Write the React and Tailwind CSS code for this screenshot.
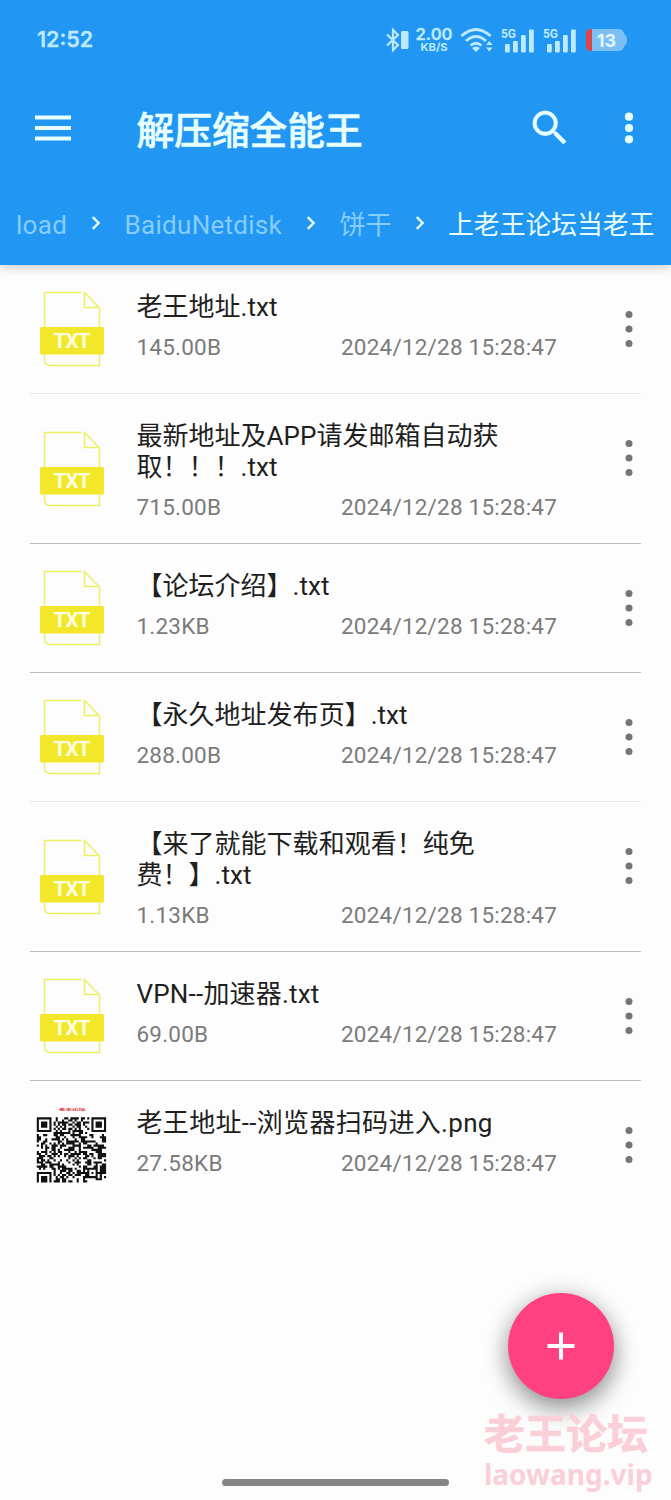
import React from "react";

const files = [
  { name: ["老王地址.txt"], size: "145.00B", faint: true },
  { name: ["最新地址及APP请发邮箱自动获", "取！！！.txt"], size: "715.00B" },
  { name: ["【论坛介绍】.txt"], size: "1.23KB" },
  { name: ["【永久地址发布页】.txt"], size: "288.00B", faint: true },
  { name: ["【来了就能下载和观看！纯免", "费！】.txt"], size: "1.13KB" },
  { name: ["VPN--加速器.txt"], size: "69.00B", wide: true },
  { name: ["老王地址--浏览器扫码进入.png"], size: "27.58KB", qr: true, wide: true },
];

function TxtIcon() {
  return (
    <svg width="66" height="76" viewBox="0 0 66 76" className="block">
      <path d="M42.5 1.5H5.5V36M5.5 63V69Q5.5 74.5 12 74.5H60.5V63M60.5 36V17L45.5 1.5V16.5H60.5" fill="none" stroke="#eeee62" strokeWidth="1.4" />
      <rect x="1" y="36" width="64" height="27.5" rx="1.5" fill="#f3e72b" />
      <text x="33" y="57" textAnchor="middle" fontFamily="Roboto" fontWeight="700" fontSize="20.5" textLength="37" fill="#fffde0">TXT</text>
    </svg>
  );
}

const N = 33;
function finder(x, y, ox, oy) {
  const a = x - ox, b = y - oy;
  if (a < -1 || b < -1 || a > 7 || b > 7) return null;
  if (a === -1 || b === -1 || a === 7 || b === 7) return false;
  const d = Math.max(Math.abs(a - 3), Math.abs(b - 3));
  return d === 3 || d < 2;
}
function module(x, y) {
  for (const [ox, oy] of [[0, 0], [N - 7, 0], [0, N - 7]]) {
    const f = finder(x, y, ox, oy);
    if (f !== null) return f;
  }
  const d = Math.max(Math.abs(x - 26), Math.abs(y - 26));
  if (d <= 2) return d !== 1;
  let h = (x * 374761393 + y * 668265263) | 0;
  h = Math.imul(h ^ (h >>> 13), 1274126177);
  return ((h ^ (h >>> 16)) & 255) < 136;
}
function QrIcon() {
  const cells = [];
  for (let y = 0; y < 31; y++) for (let x = 0; x < N; x++) if (module(x, y)) cells.push(`M${x} ${y}h1v1h-1z`);
  return (
    <svg width="72" height="80" viewBox="0 0 72 80" className="block">
      <text x="36" y="7" textAnchor="middle" fontFamily="Noto Sans CJK SC" fontWeight="700" fontSize="7" textLength="27" transform="translate(0 2.2) scale(1 .55)" fill="#d9434b">老王论坛</text>
      <path transform="translate(0.8 12.3) scale(2.1)" d={cells.join("")} fill="#111" />
    </svg>
  );
}

function Dots({ className, r = 3.5, gap = 14.5 }) {
  return (
    <svg width="10" height="40" viewBox="0 0 10 40" className={className} fill="currentColor">
      <circle cx="5" cy={20 - gap} r={r} /><circle cx="5" cy="20" r={r} /><circle cx="5" cy={20 + gap} r={r} />
    </svg>
  );
}

function Row({ file, last }) {
  return (
    <li className="px-[30px]">
      <div className={`flex min-h-[129px] w-full border-b ${last ? "border-transparent" : file.faint ? "border-[#e8e8e8]" : "border-[#bcbcbc]"}`}>
        <div className="flex w-[106.5px] shrink-0 items-center">
          <div className={file.qr ? "ml-[6px]" : "ml-[9px]"}>{file.qr ? <QrIcon /> : <TxtIcon />}</div>
        </div>
        <div className="flex flex-1 flex-col pt-[27px] pb-[21px]">
          <div className={`text-[26px] leading-[31px] text-[#1f1f1f] [text-spacing-trim:space-all] ${file.qr ? "tracking-[0.32px]" : file.wide ? "tracking-[0.2px]" : "tracking-[0.02px]"}`}>
            {file.name.map((l) => <div key={l} className="whitespace-nowrap">{l}</div>)}
          </div>
          <div className="mt-[10px] flex h-[29px] items-center text-[22.5px] leading-[29px] tracking-[0.21px] text-[#7b7b7b]">
            <span className="w-[204.5px]">{file.size}</span>
            <span className="whitespace-nowrap">2024/12/28 15:28:47</span>
          </div>
        </div>
        <div className="w-[17px] shrink-0 pt-[44px]"><Dots className="text-[#757575]" /></div>
      </div>
    </li>
  );
}

function Signal() {
  return (
    <svg width="33" height="28" viewBox="0 0 33 28" fill="#bdeaff">
      <text x="0" y="12" fontFamily="Roboto" fontWeight="700" fontSize="13" textLength="15" lengthAdjust="spacingAndGlyphs">5G</text>
      <rect x="4" y="18" width="4.8" height="8.5" rx="1" /><rect x="12" y="15" width="4.8" height="11.5" rx="1" /><rect x="20" y="9" width="4.8" height="17.5" rx="1" /><rect x="28" y="3.5" width="4.8" height="23" rx="1" />
    </svg>
  );
}

function StatusBar() {
  return (
    <div className="flex h-[80px] items-center pl-[37px] pr-[43px] text-[#bdeaff]">
      <span className="font-[Inter] text-[21.5px] font-semibold leading-none [-webkit-text-stroke:0.3px]">12:52</span>
      <div className="ml-auto flex h-[28px] items-center">
        <svg width="25" height="28" viewBox="0 0 25 28" fill="none" stroke="currentColor" strokeWidth="2.2">
          <path d="M2 8.5L13 19L8 24V4L13 9L2 19.5" /><rect x="16" y="5" width="7.5" height="18" rx="1.5" fill="currentColor" stroke="none" />
        </svg>
        <svg className="ml-[5px]" width="38" height="36" viewBox="0 -4 38 36" fill="currentColor" fontFamily="Inter">
          <text x="19" y="14.2" textAnchor="middle" fontWeight="600" fontSize="16.5" textLength="37" lengthAdjust="spacingAndGlyphs" stroke="currentColor" strokeWidth="0.3">2.00</text>
          <text x="19" y="25.4" textAnchor="middle" fontWeight="700" fontSize="11" textLength="27" lengthAdjust="spacingAndGlyphs">KB/S</text>
        </svg>
        <svg className="ml-[7px]" width="34" height="28" viewBox="0 0 34 28" fill="none" stroke="currentColor" strokeWidth="2.8">
          <path d="M1.5 10Q16 -3 30.5 10M6 15Q16 6 26 15M10.5 19.5Q16 15 21.5 19.5" />
          <path d="M12 22Q16 19 20 22L16 26ZM26 19L29.3 15L32.6 19ZM26 21.5L29.3 25.5L32.6 21.5Z" fill="currentColor" stroke="none" />
        </svg>
        <div className="ml-[7px] flex gap-[9px]"><Signal /><Signal /></div>
        <svg className="ml-[10px]" width="42" height="28" viewBox="0 0 42 28">
          <rect x="0" y="3" width="38" height="22" rx="5" fill="#7bbff5" /><path d="M38 8Q41 9 41 14Q41 19 38 20Z" fill="#7bbff5" />
          <path d="M6 3H5Q0 3 0 8V20Q0 25 5 25H6Z" fill="#dc4545" />
          <text x="20.5" y="20.5" textAnchor="middle" fontFamily="Inter" fontWeight="700" fontSize="18" fill="#e0f8ff">13</text>
        </svg>
      </div>
    </div>
  );
}

function Chevron() {
  return <svg width="10" height="14" viewBox="0 0 10 14" className="mb-[5px] ml-[24px] mr-[23.5px] shrink-0" fill="none" stroke="#e8ffff" strokeWidth="2.4"><path d="M1.8 1.2L7.6 7L1.8 12.8" /></svg>;
}

export default function App() {
  return (
    <div lang="zh-CN" className="relative flex h-[1500px] w-[671px] flex-col overflow-hidden bg-[#fdfdfd] font-[Roboto,'Noto_Sans_CJK_SC',sans-serif]">
      <header className="relative h-[265px] shrink-0 bg-[#2196f3] shadow-[0_2px_10px_rgba(0,0,0,0.22)]">
        <StatusBar />
        <div className="flex h-[96px] items-center pl-[35px] pr-[37px] text-[#e8ffff]">
          <svg width="36" height="26" viewBox="0 0 36 26" fill="currentColor"><path d="M0 .5h36v4H0zM0 11h36v4H0zM0 21.5h36v4H0z" /></svg>
          <h1 className="ml-[65.5px] pt-[5px] text-[37.7px] font-medium leading-[50px] [-webkit-text-stroke:0.6px]">解压缩全能王</h1>
          <svg className="ml-auto" width="46" height="46" viewBox="0 0 24 24" fill="currentColor" stroke="currentColor" strokeWidth="0.15"><path d="M15.5 14h-.79l-.28-.27A6.47 6.47 0 0 0 16 9.5 6.5 6.5 0 1 0 9.5 16c1.61 0 3.09-.59 4.23-1.57l.27.28v.79l5 4.99L20.49 19l-4.99-5zm-6 0C7.01 14 5 11.99 5 9.5S7.01 5 9.5 5 14 7.01 14 9.5 11.99 14 9.5 14z" /></svg>
          <Dots className="ml-[51px]" r={4.1} gap={11.3} />
        </div>
        <nav className="flex h-[89px] items-center whitespace-nowrap pl-[16px] pt-[10px] text-[26px] text-[#87cdfb]">
          <span className="tracking-[0.28px]">load</span><Chevron /><span className="tracking-[0.28px]">BaiduNetdisk</span><Chevron /><span className="-mr-[1px]">饼干</span><Chevron /><span className="text-[25.8px] text-[#e8ffff]">上老王论坛当老王</span>
        </nav>
      </header>
      <ul>{files.map((f, i) => <Row key={i} file={f} last={i === files.length - 1} />)}</ul>
      <button aria-label="+" className="absolute left-[508px] top-[1293px] flex size-[106px] items-center justify-center rounded-full bg-[#ff4081] shadow-[0_10px_24px_rgba(0,0,0,0.38),0_0_24px_rgba(0,0,0,0.12)]">
        <svg width="28" height="28" viewBox="0 0 28 28" stroke="#fff" strokeWidth="4"><path d="M14 .5V27.5M.5 14H27.5" /></svg>
      </button>
      <div className="absolute left-[484px] top-[1408px] whitespace-nowrap font-bold text-[#fbcfd8]">
        <div className="text-[41px] leading-[54px] [-webkit-text-stroke:0.6px]">老王论坛</div>
        <div className="-mt-[2px] font-['Noto_Sans',sans-serif] text-[28px] leading-[28px]">laowang.vip</div>
      </div>
      <div className="absolute left-[222px] top-[1479px] h-[7px] w-[227px] rounded-full bg-[#858585]" />
    </div>
  );
}
